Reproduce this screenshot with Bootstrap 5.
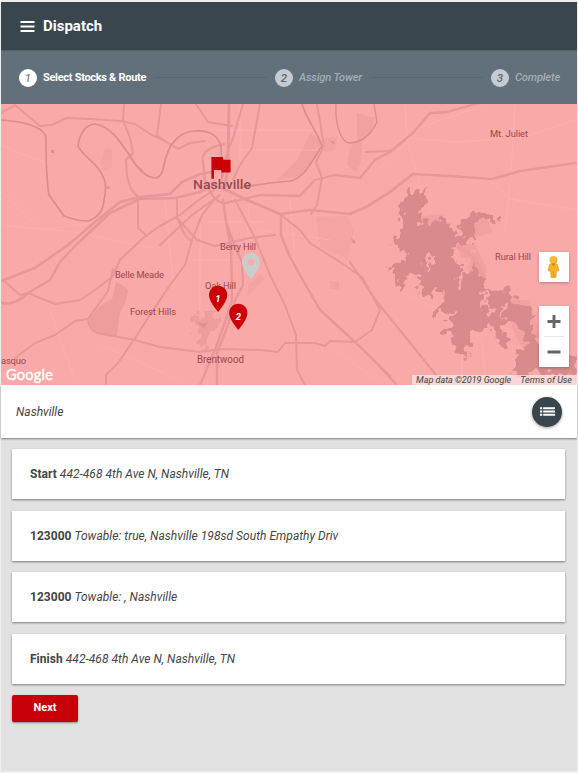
<!DOCTYPE html>
<html lang="en">
<head>
<meta charset="utf-8">
<meta name="viewport" content="width=device-width, initial-scale=1">
<title>Dispatch</title>
<link href="https://cdn.jsdelivr.net/npm/bootstrap@5.3.0/dist/css/bootstrap.min.css" rel="stylesheet">
<style>
body{font-family:Roboto,"Liberation Sans",sans-serif;font-size:12px;line-height:18px;color:#444;background:#eceef0;overflow:hidden}
.app-shell{margin:2px 1px 0;height:769px;background:#e1e1e1}
.top-bar{height:48px;background:#39464e;padding-left:19px;gap:8px;font-size:15px}
.steps{height:54px;background:#62707b;padding:0 17px 0 18px;font-size:11px;border-top:1px solid #53616b}
.step-num{width:18px;height:18px;background:#c5cbd0;color:#5b6973;font-size:11.5px;font-style:italic;line-height:18px;letter-spacing:0}
.step-item{gap:6px;color:#a5adb3;font-style:italic;font-weight:500;letter-spacing:-.12px}
.step-item.current{color:#fff;font-style:normal;font-weight:700;letter-spacing:-.3px}
.current .step-num{background:#fff;font-weight:400}
.step-line{height:1px;background:#5a6872}
.map-pane{height:281px;background:#faa9a9}
.map-pane svg.map-art{display:block;width:576px;height:281px}
.map-btn{width:30px;background:#fff;box-shadow:0 1px 3px rgba(0,0,0,.25)}
.map-tools{right:8px;top:148px;gap:24px}
.map-terms{right:0;bottom:0;height:10px;background:rgba(245,235,235,.7);font-size:9px;line-height:10px;font-style:italic;padding:0 5px 0 4px;gap:4px;white-space:nowrap}
.search-row{height:53px;padding:0 15px;box-shadow:0 1px 2px rgba(0,0,0,.45)}
.round-btn{width:30px;height:30px;background:#39464e;box-shadow:0 1px 3px rgba(0,0,0,.4)}
.stops{padding:11px 12px 0 11px}
.stop-card{height:50px;margin-bottom:11.5px;padding:0 18px;box-shadow:0 1px 2px rgba(0,0,0,.45);letter-spacing:.035px}
.next-btn{width:66px;height:27px;background:#c8000a;color:#fff;font-size:11px;border-radius:2px;box-shadow:0 1px 2px rgba(0,0,0,.4)}
.place{fill:#98494e;font-size:9.3px}
</style>
</head>
<body>
<div class="app-shell">
  <header class="top-bar d-flex align-items-center text-white fw-bold">
    <svg width="15" height="11" viewBox="0 0 15 11"><path d="M.5 1h14M.5 5.500h14M.5 10h14" stroke="#fff" stroke-width="1.800"/></svg>
    <span>Dispatch</span>
  </header>
  <nav class="steps d-flex align-items-center">
    <div class="step-item current d-flex align-items-center"><span class="step-num rounded-circle text-center">1</span><span>Select Stocks &amp; Route</span></div>
    <div class="step-line flex-fill ms-2 me-2"></div>
    <div class="step-item d-flex align-items-center"><span class="step-num rounded-circle text-center">2</span><span>Assign Tower</span></div>
    <div class="step-line flex-fill ms-2 me-2"></div>
    <div class="step-item d-flex align-items-center"><span class="step-num rounded-circle text-center">3</span><span>Complete</span></div>
  </nav>
  <section class="map-pane position-relative overflow-hidden">
    <svg class="map-art" viewBox="1 104 576 281" font-family="Roboto,'Liberation Sans',sans-serif">
      <defs><filter id="shore" x="-5%" y="-5%" width="110%" height="110%" color-interpolation-filters="sRGB"><feTurbulence type="fractalNoise" baseFrequency=".13" numOctaves="2" seed="4"/><feDisplacementMap in="SourceGraphic" scale="20" xChannelSelector="R" yChannelSelector="G"/></filter></defs>
      <!-- parks and built-up areas -->
      <g fill="#ee9c9c">
        <path d="M116 282l6 3 6 5-2 12-6 10-3 24-18-1-8-8-1-9 10-12 12-7z"/>
        <path d="M310 133l12 9-9 18-14 16-22 4 20-20zM357 113l18 5-5 17-8 6-2 25-6 6-7-8 3-16 7-8z" opacity=".7"/>
        <path d="M316 217l31-1 7 15-6 28-28-12z" opacity=".4"/>
        <path filter="url(#shore)" d="M195 316l12-3 12 6-3 12-7 4-2 14-6-1v-13l-10-8z"/>
        <path d="M417 217l26-3 10 18-24 8zM470 218l16-4 6 18-20 6zM455 244l20 0 12 26-10 16-12-22zM505 300l25 0 10 35-14 18-12-20z" opacity=".7"/>
        <path d="M105 148l7 2 0 17-8 4-3-9zM248 285l12-10 4 4-16 17zM325 138l12-1-2 13-11 2zM330 281h9v8h-9z" opacity=".5"/>
      </g>
      <!-- minor streets -->
      <g fill="none" stroke="#fbb0b0" stroke-width="1">
        <path d="M1 145l28 12 16 5M1 190l40 40 60-8M405 104l2 36 13 45M404 138l55 4 66-5 52-18M515 104l-4 70-6 60M490 180l20 19 67 11M378 170l45-44 60-20M240 104v60M250 195l-6 80M290 200l5 60M200 210v110M165 200l8 80M330 345l50 38M100 345l80 35M397 290l40 18 25 28 0 48M480 320l5 55M50 310l25 70M1 225l80 8 70 15M210 130h110M238 150h80M206 222h58M194 260h60M260 230l70 10"/>
      </g>
      <!-- roads -->
      <g fill="none" stroke="#e89697" stroke-width="2" stroke-linejoin="round" stroke-linecap="round">
        <path d="M1 113l14-8 25 21 12-1 14-7 24 1 30 2 15 3 15 10 15 7 13 8 12-6 15-2"/>
        <path d="M124 104l-1 16 7 18 3 15-7 7 1 16 4 13 7 8v31l9 8M161 104l-4 31 8 6"/>
        <path d="M1 281l34-13 33-23 27-23 25-20 20-5 30-3 12-12 18-8 12-2" stroke-width="2.5"/>
        <path d="M1 303q14 3 27-10l22-13 10-18 17-18 33-31 30-14 35-1 25-6 15-8" stroke-width="2.5"/>
        <path d="M3 280l17 15 8-2 27 11 25-4 18-12 15-12 7-16 23-22 17-12 20-11 20-16 14-9"/>
        <path d="M177 198v20l8 17 5 5M196 104l12 18 24 4M243 104l-9 31-9 25-3 20M260 104l-8 44-12 17-7 15"/>
        <path d="M229 104l-1 56-3 30" stroke-width="3"/>
        <path d="M224 144q-24 5-21 18l2 18q8 23 20 23l15-3 20-5 40 1 15-16 20-5 25 3 15-18 15-8 23-19 17-20 17-1 35-10" stroke-width="2.3"/>
        <path d="M317 104l7 42-8 16 6 16-5 27-6 9"/>
        <path d="M220 187l25 12 35 15 30-4 40 4 18-8 22-14 23-18 37 2 42 3 28-8 56-8" stroke-width="2.7"/>
        <path d="M240 197l40 17 20 16 10 13 30 19 22 15 8 15 10 18-8 20-17 12 35 34"/>
        <path d="M281 214v21l8 20 11 20 20 35 35 32" stroke-width="2.4"/>
        <path d="M235 200l20 38 15 37 15 30 11 30 1 35 8 15"/>
        <path d="M223 200l3 22 5 25 1 53-7 22-10 28-15 35M226 222l9 25 7 15 1 23-8 15-7 25-11 28 0 32" stroke-width="2.4"/>
        <path d="M275 235l-25 3-35 8-18-6-20-22M220 195l-28 20-32 30"/>
        <path d="M15 358l20-15 20-8 20-14 13-2q2 14 14 15l33 6 25 7 40 5 22-3 38 1 18 2 7-9h30l10 3 5-5 25 1"/>
        <path d="M88 319l10-14 10-14 5-22M106 385v-10l12-12 17-25 15-23 20-30 15-20 7-25 10-25 12-15"/>
        <path d="M378 303l58 72M378 365l19 20M350 262l28 41M366 152l24-1"/>
      </g>
      <!-- rivers -->
      <g fill="none" stroke="#dc8c8d" stroke-width="1.7" stroke-linejoin="round">
        <path d="M1 120C20 121 46 126 46 139C46 160 46 178 49 195L64 216Q77 221 88 221Q103 216 104 200C108 183 104 177 98 168C89 158 80 152 78 146C79 136 85 124 95 124C112 127 121 143 130 156C137 168 146 178 156 178Q162 177 164 165C168 143 180 132 194 131C210 130 218 135 221 147L222 178M240 188C258 184 276 182 291 181C306 176 311 162 322 146C315 128 306 118 302 104"/>
        <path d="M336 104C335 125 341 143 350 143C362 142 370 136 377 122L374 104" stroke-width="1.4"/>
      </g>
      <!-- lake -->
      <g filter="url(#shore)">
        <path fill="#d98b8c" d="M410 187l5 4 5 2 9 -1-6 9 1 6-6 8 1 6 10 5 7-4 9-3 4 6 4 7 8 2-1-12 11-6 12-4 8 2 8 9-6 2-2-4-14-1-5 8 3 9-11 7-10 5 1 9 8 8 6 9 8-10 4 12 3 10 8 2 16-1 7 13 15 4 5 10-7 8 11 21 20 10 17 4v18l-17-2-20-4-12 6-15-2 7-21 9-10-10-20-13-1-2 10 8 8-8 8-8-9-4-11-12 1-8 10-5 22-9-9-4-12-11-8 9-11 7-10-15 1-9 0 9-11 1-11-15 6-11-5 4-12-14-7-7 22-4-18-6-9 12-6 4-10-12-3-3-7 8-3 2-20-5-10z"/>
        <path fill="none" stroke="#faa9a9" stroke-width="4" d="M474 252l-18 36M482 290l7 22M433 254l-7 14M507 303l-6 14"/>
      </g>
      <path fill="none" stroke="#ee9c9c" stroke-width="4" d="M457 246l14 9 14 22"/>
      <g fill="#df8f8f"><path d="M139 167l3 2 2 4-4-2zM51 150h3v3h-3zM196 321l7 3 5-2-4 6zM330 141l5 1-2 2zM105 188l4-2 1 3zM351 238l5 4-3 2z"/></g>
      <!-- place names -->
      <g class="place">
        <text x="193" y="189" style="font-size:13.2px" textLength="58" lengthAdjust="spacingAndGlyphs" font-weight="500">Nashville</text>
        <text x="490" y="137" textLength="38">Mt. Juliet</text><text x="495" y="260" textLength="36">Rural Hill</text>
        <text x="220" y="250" textLength="36">Berry Hill</text><text x="115" y="278" textLength="49">Belle Meade</text>
        <text x="205" y="289" textLength="31">Oak Hill</text><text x="130" y="315" textLength="46">Forest Hills</text>
        <text x="197" y="363" style="font-size:10px" textLength="47" lengthAdjust="spacingAndGlyphs">Brentwood</text><text x="1" y="364" textLength="25">asquo</text>
      </g>
      <!-- markers -->
      <g transform="translate(205 149.4) scale(1.28)"><path fill="#cb0007" d="M14.4 8L14 6H5v17h2v-7h5.600l.4 2h7V8z"/></g>
      <path transform="translate(235.400 250.400) scale(1.300)" fill="#cbcbcb" fill-rule="evenodd" d="M12 2C8.130 2 5 5.130 5 9c0 5.250 7 13 7 13s7-7.750 7-13c0-3.870-3.130-7-7-7zm0 9.500a2.500 2.500 0 1 1 0-5 2.500 2.500 0 0 1 0 5z"/>
      <path transform="translate(202.500 283.200) scale(1.300)" fill="#cb0007" d="M12 2C8.130 2 5 5.130 5 9c0 5.250 7 13 7 13s7-7.750 7-13c0-3.870-3.130-7-7-7z"/>
      <path transform="translate(222.700 301.200) scale(1.300)" fill="#cb0007" d="M12 2C8.130 2 5 5.130 5 9c0 5.250 7 13 7 13s7-7.750 7-13c0-3.870-3.130-7-7-7z"/>
      <g fill="#fff" font-size="9.500" font-weight="700" font-style="italic" text-anchor="middle"><text x="218" y="302">1</text><text x="238.500" y="320">2</text></g>
      <text x="6" y="380" fill="#fff" font-family="Lato,sans-serif" font-size="14.500" font-weight="400" textLength="47" stroke="#fff" stroke-width=".4">Google</text>
    </svg>
    <div class="map-tools position-absolute d-flex flex-column">
      <div class="map-btn d-flex justify-content-center"><svg width="30" height="30" viewBox="0 0 30 30"><path d="M10.500 12.500l3-1.500h2l3 1.500 1.500 6-1.500.8-1-.8-.5 7h-5l-.5-7-1 .8-1.500-.8z" fill="#f5b324" stroke="#c98c1c" stroke-width=".5"/><circle cx="14.500" cy="8" r="3.700" fill="#fbbb2d" stroke="#dba02a" stroke-width=".5"/><path d="M12.500 11.500h4l-2 3z" fill="#d77e1c"/><path d="M14.500 19v6" stroke="#d79520" stroke-width=".7"/></svg></div>
      <div class="map-btn d-flex flex-column align-items-center"><svg width="30" height="61" viewBox="0 0 30 61"><path d="M5 30.500h20" stroke="#e6e6e6"/><path d="M8.500 15.500h13M15 9v13M8.500 46h13" stroke="#666" stroke-width="2.900"/></svg></div>
    </div>
    <div class="map-terms position-absolute d-flex"><span>Map data ©2019 Google</span><span class="border-start ps-1">Terms of Use</span></div>
  </section>
  <div class="search-row bg-white d-flex align-items-center justify-content-between">
    <span class="fst-italic">Nashville</span>
    <span class="round-btn rounded-circle d-flex align-items-center justify-content-center"><svg width="15" height="9" viewBox="0 0 15 9"><path d="M0 1.200h2.200M3.200 1.200H15M0 4.500h2.200M3.200 4.500H15M0 7.800h2.200M3.200 7.800H15" stroke="#fff" stroke-width="2.100"/></svg></span>
  </div>
  <main class="stops">
    <div class="stop-card bg-white d-flex align-items-center"><span><b>Start</b> <i>442-468 4th Ave N, Nashville, TN</i></span></div>
    <div class="stop-card bg-white d-flex align-items-center"><span><b>123000</b> <i>Towable: true, Nashville 198sd South Empathy Driv</i></span></div>
    <div class="stop-card bg-white d-flex align-items-center"><span><b>123000</b> <i>Towable: , Nashville</i></span></div>
    <div class="stop-card bg-white d-flex align-items-center"><span><b>Finish</b> <i>442-468 4th Ave N, Nashville, TN</i></span></div>
    <button class="next-btn btn p-0 border-0 fw-bold d-block">Next</button>
  </main>
</div>
<script src="https://cdn.jsdelivr.net/npm/bootstrap@5.3.0/dist/js/bootstrap.bundle.min.js"></script>
</body>
</html>
